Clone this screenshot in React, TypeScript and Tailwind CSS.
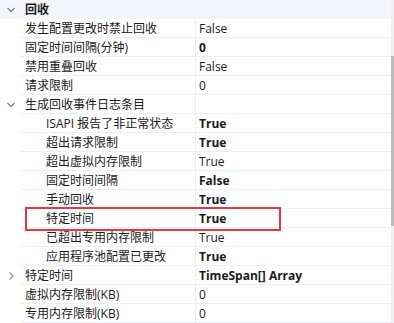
import React from "react";

type Row = {
  name: string;
  value?: string;
  bold?: boolean;
  level?: number;
  chevron?: "down" | "right";
};

const rows: Row[] = [
  { name: "发生配置更改时禁止回收", value: "False" },
  { name: "固定时间间隔(分钟)", value: "0", bold: true },
  { name: "禁用重叠回收", value: "False" },
  { name: "请求限制", value: "0" },
  { name: "生成回收事件日志条目", value: "", chevron: "down" },
  { name: "ISAPI 报告了非正常状态", value: "True", bold: true, level: 1 },
  { name: "超出请求限制", value: "True", bold: true, level: 1 },
  { name: "超出虚拟内存限制", value: "True", level: 1 },
  { name: "固定时间间隔", value: "False", bold: true, level: 1 },
  { name: "手动回收", value: "True", bold: true, level: 1 },
  { name: "特定时间", value: "True", bold: true, level: 1 },
  { name: "已超出专用内存限制", value: "True", level: 1 },
  { name: "应用程序池配置已更改", value: "True", bold: true, level: 1 },
  { name: "特定时间", value: "TimeSpan[] Array", bold: true, chevron: "right" },
  { name: "虚拟内存限制(KB)", value: "0" },
  { name: "专用内存限制(KB)", value: "0" },
];

function ChevronDown() {
  return (
    <svg width="10" height="8" viewBox="0 0 10 8" className="block">
      <polyline points="1.5,2 5,5.5 8.5,2" fill="none" stroke="#8a8a8a" strokeWidth="1.4" />
    </svg>
  );
}

function ChevronRight() {
  return (
    <svg width="8" height="10" viewBox="0 0 8 10" className="block">
      <polyline points="2.5,1.5 6,5 2.5,8.5" fill="none" stroke="#9a9a9a" strokeWidth="1.4" />
    </svg>
  );
}

export default function App() {
  return (
    <div
      className="relative w-[394px] h-[323px] overflow-hidden bg-white text-[12px] text-[#1a1a1a] flex"
      style={{ fontFamily: '"Open Sans", "Noto Sans CJK SC", sans-serif' }}
    >
      <div className="w-[391px] flex flex-col">
        <div className="h-[19px] flex items-center bg-[#f2f5fa]">
          <div className="w-[21px] flex justify-center">
            <ChevronDown />
          </div>
          <div className="pl-[4px] font-bold leading-[19px]">回收</div>
        </div>
        {rows.map((r, i) => (
          <div key={i} className="h-[19px] flex">
            <div className="w-[21px] shrink-0 flex items-center justify-center">
              {r.chevron === "down" && <ChevronDown />}
              {r.chevron === "right" && <ChevronRight />}
            </div>
            <div
              className={`w-[174px] shrink-0 border-b border-[#eceff4] leading-[19px] whitespace-nowrap ${
                r.level === 1 ? "pl-[25px]" : "pl-[4px]"
              }`}
            >
              {r.name}
            </div>
            <div
              className={`flex-1 border-b border-l border-[#eceff4] pl-[3px] leading-[19px] whitespace-nowrap ${
                r.bold ? "font-bold" : ""
              }`}
            >
              {r.value}
            </div>
          </div>
        ))}
      </div>
      <div className="w-[3px] bg-[#f0f0f0] relative">
        <div className="absolute left-0 right-0 top-[56px] h-[170px] bg-[#bdbdbd]" />
      </div>
      <div className="absolute left-[25px] top-[207px] w-[256px] h-[24px] border-2 border-[#e8383d]" />
    </div>
  );
}
